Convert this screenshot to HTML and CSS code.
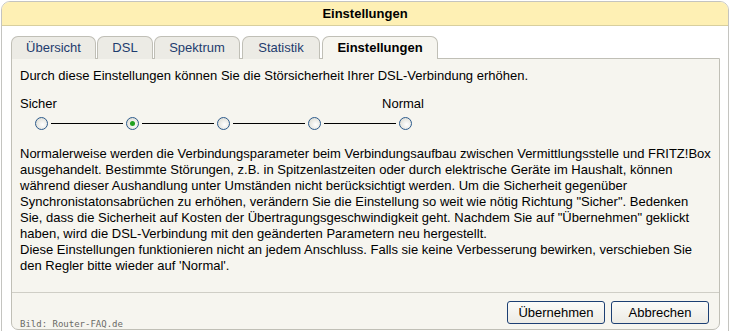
FILE: index.html
```html
<!DOCTYPE html>
<html lang="de">
<head>
    <meta charset="UTF-8">
    <title>Einstellungen</title>
    <link rel="stylesheet" href="styles.css">
</head>
<body>
    <div class="dialog">
        <div class="head">Einstellungen</div>
        <div class="content">
            <div class="tabs">
                <div class="tab tab1">Übersicht</div>
                <div class="tab tab2">DSL</div>
                <div class="tab tab3">Spektrum</div>
                <div class="tab tab4">Statistik</div>
                <div class="tab active">Einstellungen</div>
            </div>
            <div class="panel">
                <p class="intro">Durch diese Einstellungen können Sie die Störsicherheit Ihrer DSL-Verbindung erhöhen.</p>
                <div class="labels">
                    <span>Sicher</span>
                    <span>Normal</span>
                </div>
                <div class="slider">
                    <span class="radio"></span>
                    <span class="line"></span>
                    <span class="radio checked"></span>
                    <span class="line"></span>
                    <span class="radio"></span>
                    <span class="line"></span>
                    <span class="radio"></span>
                    <span class="line"></span>
                    <span class="radio"></span>
                </div>
                <p class="info">
                    Normalerweise werden die Verbindungsparameter beim Verbindungsaufbau zwischen Vermittlungsstelle und FRITZ!Box<br>
                    ausgehandelt. Bestimmte Störungen, z.B. in Spitzenlastzeiten oder durch elektrische Geräte im Haushalt, können<br>
                    während dieser Aushandlung unter Umständen nicht berücksichtigt werden. Um die Sicherheit gegenüber<br>
                    Synchronistatonsabrüchen zu erhöhen, verändern Sie die Einstellung so weit wie nötig Richtung "Sicher". Bedenken<br>
                    Sie, dass die Sicherheit auf Kosten der Übertragungsgeschwindigkeit geht. Nachdem Sie auf "Übernehmen" geklickt<br>
                    haben, wird die DSL-Verbindung mit den geänderten Parametern neu hergestellt.<br>
                    Diese Einstellungen funktionieren nicht an jedem Anschluss. Falls sie keine Verbesserung bewirken, verschieben Sie<br>
                    den Regler bitte wieder auf 'Normal'.
                </p>
                <div class="footer">
                    <span class="credit">Bild: Router-FAQ.de</span>
                    <div class="buttons">
                        <button class="btn">Übernehmen</button>
                        <button class="btn">Abbrechen</button>
                    </div>
                </div>
            </div>
        </div>
    </div>
</body>
</html>
```

FILE: styles.css
```css
* {
    box-sizing: border-box;
}
body {
    margin: 0;
    padding: 1px 0 0 1px;
    background: #ffffff;
    font-family: "Liberation Sans", Arial, sans-serif;
    font-size: 13px;
    color: #000;
}
.dialog {
    width: 728px;
    height: 340px;
    border: 1px solid #c4c4c0;
    border-radius: 9px 9px 0 0;
    background: #ffffff;
    overflow: hidden;
}
.head {
    height: 24px;
    background: #fef0b4;
    border-bottom: 1px solid #d8cf9e;
    text-align: center;
    font-weight: bold;
    line-height: 23px;
}
.content {
    padding: 10px 8px 0 9px;
}
.tabs {
    display: flex;
    gap: 1px;
    height: 22px;
}
.tab {
    height: 23px;
    padding-top: 3px;
    text-align: center;
    color: #1e3c6e;
    background: #ecebe5;
    border: 1px solid #c0bfb6;
    border-bottom: none;
    border-radius: 7px 7px 0 0;
}
.tab1 { width: 85px; }
.tab2 { width: 56px; }
.tab3 { width: 86px; }
.tab4 { width: 78px; margin-left: 1px; }
.active {
    width: 116px;
    margin-left: 1px;
    color: #000;
    font-weight: bold;
    background: #f6f5ef;
    position: relative;
    z-index: 1;
}
.panel {
    height: 272px;
    background: #f6f5ef;
    border: 1px solid #c0bfb6;
    border-radius: 0 0 7px 7px;
    padding: 9px 8px 0 8px;
    display: flex;
    flex-direction: column;
}
p {
    margin: 0;
    line-height: 16px;
}
.labels {
    width: 404px;
    margin-top: 12px;
    display: flex;
    justify-content: space-between;
    line-height: 16px;
}
.slider {
    display: flex;
    align-items: center;
    margin: 5px 0 0 15px;
    height: 13px;
}
.radio {
    width: 13px;
    height: 13px;
    border: 1px solid #2c5a8c;
    border-radius: 50%;
    background: radial-gradient(circle at 60% 60%, #ffffff 0, #e6e6e0 60%, #d4d4cc 100%);
    display: flex;
    align-items: center;
    justify-content: center;
}
.checked::after {
    content: "";
    width: 5px;
    height: 5px;
    border-radius: 50%;
    background: #21a121;
}
.line {
    width: 72px;
    height: 1px;
    margin: 0 3px;
    background: #000;
}
.info {
    margin-top: 16px;
}
.footer {
    margin: 18px -8px 0 -8px;
    border-top: 1px solid #cfcec6;
    flex: 1;
    display: flex;
    justify-content: space-between;
    align-items: flex-start;
    padding: 8px 10px 0 8px;
}
.credit {
    font-family: "DejaVu Sans Mono", monospace;
    font-size: 9px;
    color: #6a6a66;
    margin-top: 18px;
}
.buttons {
    display: flex;
    gap: 6px;
}
.btn {
    width: 98px;
    height: 23px;
    font-family: "Liberation Sans", Arial, sans-serif;
    font-size: 13px;
    color: #000;
    border: 1px solid #1c3f73;
    border-radius: 3px;
    background: linear-gradient(#fbfbf8, #ecebe5);
    padding: 0;
}
```
